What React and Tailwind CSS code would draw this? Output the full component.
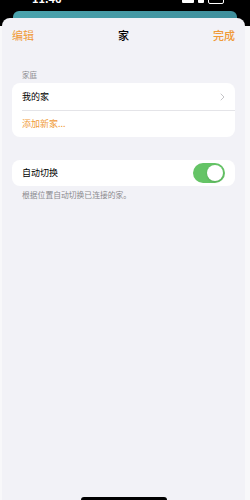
import React, { useState } from "react";

const font = { fontFamily: '"Noto Sans CJK SC", "Noto Sans", sans-serif' };

const Toggle = ({ on, setOn }) => (
  <button
    onClick={() => setOn(!on)}
    className={`w-[32px] h-[20px] rounded-full p-[2px] flex ${on ? "bg-[#65c466] justify-end" : "bg-[#e5e5ea] justify-start"}`}
  >
    <span className="w-[16px] h-[16px] rounded-full bg-white shadow-sm" />
  </button>
);

const EdgeStrip = ({ className }) => (
  <div className={`flex flex-col ${className}`}>
    <div className="h-[8px] bg-black" />
    <div className="flex-1 bg-[#f8f8fa]" />
  </div>
);

export default function App() {
  const [autoSwitch, setAutoSwitch] = useState(true);

  return (
    <div className="w-[250px] h-[500px] bg-black flex flex-col overflow-hidden" style={font}>
      {/* status bar, cut off at the top */}
      <div className="h-[11px] flex items-start justify-between pl-[32px] pr-[26px] overflow-hidden">
        <span className="text-white text-[11px] leading-[11px] font-semibold -translate-y-[7px]">11:46</span>
        <div className="flex items-start gap-[4px] -translate-y-[2px]">
          <span className="w-[12px] h-[5px] bg-white rounded-[1px]" />
          <span className="w-[6px] h-[5px] bg-white rounded-[1px]" />
          <span className="w-[16px] h-[6px] border border-white rounded-[2px]" />
        </div>
      </div>
      <div className="mx-[13px] h-[7px] rounded-t-[6px] bg-gradient-to-r from-[#4aa3ad] to-[#3f8f9c]" />
      <div className="flex-1 flex">
        <EdgeStrip className="w-[2px]" />
        <div className="flex-1 bg-[#f2f2f7] rounded-t-[8px] flex flex-col">
          <div className="flex items-center justify-between px-[10px] h-[34px]">
            <button className="text-[11px] text-[#f09a37]">编辑</button>
            <span className="text-[11px] text-black font-medium">家</span>
            <button className="text-[11px] text-[#f09a37] font-medium">完成</button>
          </div>

          <div className="mt-[17px] px-[10px]">
            <div className="px-[10px] h-[11px] leading-[11px] text-[7.5px] text-[#8a8a8e] mb-[3px]">家庭</div>
            <div className="bg-white rounded-[8px] overflow-hidden">
              <div className="h-[27px] flex items-center justify-between pl-[10px] pr-[10px]">
                <span className="text-[9px] text-black">我的家</span>
                <svg width="5" height="8" viewBox="0 0 5 8" fill="none">
                  <path d="M1 1l3 3-3 3" stroke="#c4c4c7" strokeWidth="1" strokeLinecap="round" strokeLinejoin="round" />
                </svg>
              </div>
              <div className="ml-[10px] h-px bg-[#e4e4e8]" />
              <div className="h-[26px] flex items-center pl-[10px]">
                <span className="text-[9px] text-[#f09a37]">添加新家...</span>
              </div>
            </div>
          </div>

          <div className="mt-[23px] px-[10px]">
            <div className="bg-white rounded-[8px] h-[26px] flex items-center justify-between pl-[10px] pr-[10px]">
              <span className="text-[9px] text-black">自动切换</span>
              <Toggle on={autoSwitch} setOn={setAutoSwitch} />
            </div>
            <div className="px-[10px] mt-[3px] text-[7.8px] text-[#8a8a8e]">根据位置自动切换已连接的家。</div>
          </div>

          <div className="flex-1" />
          <div className="flex justify-center">
            <span className="w-[86px] h-[3px] rounded-t-full bg-black" />
          </div>
        </div>
        <EdgeStrip className="w-[5px]" />
      </div>
    </div>
  );
}
